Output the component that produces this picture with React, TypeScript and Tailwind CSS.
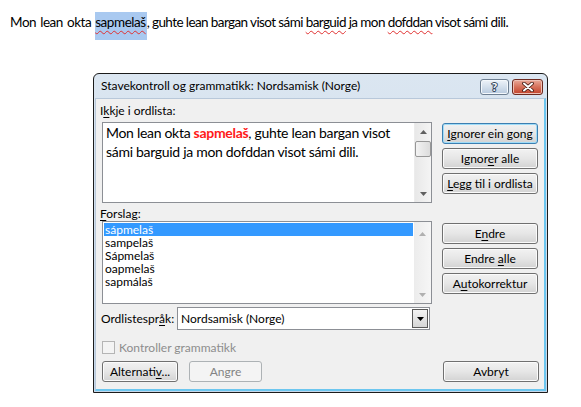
import React from "react";

const UI = "font-['Lato',sans-serif]";

function U({ children }: { children: React.ReactNode }) {
  return <span className="underline underline-offset-[2px] decoration-[1px]">{children}</span>;
}

function Btn({
  children,
  className = "",
  focused = false,
  disabled = false,
}: {
  children: React.ReactNode;
  className?: string;
  focused?: boolean;
  disabled?: boolean;
}) {
  if (disabled) {
    return (
      <div
        className={`h-[21px] flex items-center justify-center rounded-[3px] border border-[#adb2b5] bg-[#f4f4f4] text-[12px] text-[#838383] ${className}`}
      >
        {children}
      </div>
    );
  }
  if (focused) {
    return (
      <div
        className={`h-[21px] flex items-center justify-center rounded-[3px] border border-[#3c7fb1] bg-gradient-to-b from-[#f2f2f2] via-[#e6e6e6] to-[#d3d3d3] shadow-[inset_0_0_0_1px_#9fdcf8] text-[12px] text-black ${className}`}
      >
        {children}
      </div>
    );
  }
  return (
    <div
      className={`h-[21px] flex items-center justify-center rounded-[3px] border border-[#707070] bg-gradient-to-b from-[#f2f2f2] via-[#e6e6e6] to-[#d3d3d3] shadow-[inset_0_0_0_1px_#fbfbfb] text-[12px] text-black ${className}`}
    >
      {children}
    </div>
  );
}

function Arrow({ up, color = "#606060" }: { up?: boolean; color?: string }) {
  return (
    <svg width="7" height="4" viewBox="0 0 7 4">
      {up ? (
        <path d="M0 4 L3.5 0 L7 4 Z" fill={color} />
      ) : (
        <path d="M0 0 L7 0 L3.5 4 Z" fill={color} />
      )}
    </svg>
  );
}

const wavy =
  "underline decoration-wavy decoration-[#e03030] decoration-[1px] underline-offset-[3px]";

export default function App() {
  return (
    <div className={`w-[581px] h-[407px] bg-white overflow-hidden relative`}>
      {/* document text */}
      <div className="h-[73px] pt-[12px] pl-[10px] font-['Lato',sans-serif] text-[13.5px] tracking-[-0.45px] text-black whitespace-nowrap">
        <span className="leading-[20px] align-top inline-block [word-spacing:1px]">Mon lean okta&nbsp;</span>
        <span className="inline-block bg-[#a9c9f0] h-[28px] leading-[20px] align-top pr-[1px]">
          <span className={wavy}>sapmelaš</span>
        </span>
        <span className="leading-[20px] align-top inline-block tracking-[-0.6px]">
          , guhte lean bargan visot sámi <span className={wavy}>barguid</span> ja mon{" "}
          <span className={wavy}>dofddan</span> visot sámi dili.
        </span>
      </div>

      {/* dialog */}
      <div className={`ml-[93px] w-[455px] h-[320px] rounded-t-[6px] border border-[#1b1b1b] bg-gradient-to-b from-[#dbe6f1] to-[#c6d7e9] flex flex-col ${UI}`}>
        {/* title bar */}
        <div className="h-[24px] flex items-start">
          <div className="flex-1 pl-[7px] pt-[4px] text-[12px] leading-[16px] text-black">
            Stavekontroll og grammatikk: Nordsamisk (Norge)
          </div>
          <div className="flex mt-[5px] mr-[4px] gap-[3px]">
            <div className="w-[29px] h-[16px] rounded-[3px] border border-[#6e7f92] bg-gradient-to-b from-[#eef3f9] via-[#d3dfec] to-[#b7c9de] shadow-[inset_0_0_0_1px_#f4f8fc] flex items-center justify-center">
              <span className="text-[12px] leading-none font-bold text-white [-webkit-text-stroke:2px_#3b4b62] [paint-order:stroke_fill]">?</span>
            </div>
            <div className="w-[31px] h-[16px] rounded-[3px] border border-[#6d2a20] bg-gradient-to-b from-[#e9a99a] via-[#d6705a] to-[#c2412a] shadow-[inset_0_0_0_1px_#eec0b5] flex items-center justify-center">
              <svg width="12" height="10" viewBox="0 0 12 10">
                <path d="M2 1.5 L10 8.5 M10 1.5 L2 8.5" stroke="#3a130c" strokeWidth="3.6" strokeLinecap="round" />
                <path d="M2 1.5 L10 8.5 M10 1.5 L2 8.5" stroke="#ffffff" strokeWidth="2" strokeLinecap="round" />
              </svg>
            </div>
          </div>
        </div>

        {/* client */}
        <div className="flex-1 mx-[1px] mb-[1px] border-l border-t border-[#b8c8da] border-r-2 border-b-2 border-r-[#6cc6ef] border-b-[#6cc6ef] bg-[#f0f0f0] pl-[6px] text-[12px] text-black">
          {/* label 1 */}
          <div className="pt-[4px] -ml-[2px] h-[23px] leading-[15px]">
            I<U>k</U>kje i ordlista:
          </div>
          <div className="flex gap-[10px]">
            {/* text box */}
            <div className="w-[330px] h-[81px] border border-[#8c8f95] bg-white flex">
              <div className="flex-1 pl-[3px] pt-[0px] font-['Lato',sans-serif] text-[14px] tracking-[-0.3px] leading-[19px] text-black whitespace-nowrap">
                Mon lean okta <span className="font-bold text-[#ff1a1a]">sapmelaš</span>, guhte lean bargan visot
                <br />
                sámi barguid ja mon dofddan visot sámi dili.
              </div>
              <div className="w-[17px] bg-gradient-to-r from-[#e8e8e8] to-[#f4f4f4] border-l border-[#ececec] flex flex-col items-center">
                <div className="h-[17px] flex items-center justify-center">
                  <Arrow up />
                </div>
                <div className="w-[16px] h-[16px] mt-[1px] rounded-[2px] border border-[#979797] bg-gradient-to-r from-[#f3f3f3] to-[#dcdcdc]" />
                <div className="flex-1" />
                <div className="h-[17px] flex items-center justify-center">
                  <Arrow />
                </div>
              </div>
            </div>
            {/* buttons */}
            <div className="pt-[1px] flex flex-col gap-[4px]">
              <Btn className="w-[96px]" focused>
                <span><U>I</U>gnorer ein gong</span>
              </Btn>
              <Btn className="w-[96px]">
                <span>Ignor<U>e</U>r alle</span>
              </Btn>
              <Btn className="w-[96px]">
                <span><U>L</U>egg til i ordlista</span>
              </Btn>
            </div>
          </div>

          {/* label 2 */}
          <div className="pt-[3px] -ml-[2px] h-[18px] leading-[15px]">
            <U>F</U>orslag:
          </div>
          <div className="flex gap-[10px]">
            <div className="w-[330px] h-[83px] border border-[#8c8f95] bg-white flex">
              <div className="flex-1 pt-[1px] pl-[1px] pr-[1px] text-[12px] leading-[13px]">
                <div className="bg-[#3399ff] text-white pl-[1px]">sápmelaš</div>
                <div className="pl-[1px]">sampelaš</div>
                <div className="pl-[1px]">Sápmelaš</div>
                <div className="pl-[1px]">oapmelaš</div>
                <div className="pl-[1px]">sapmálaš</div>
              </div>
              <div className="w-[17px] bg-gradient-to-r from-[#ececec] to-[#f6f6f6] flex flex-col items-center">
                <div className="h-[17px] mt-[3px] flex items-center justify-center">
                  <Arrow up color="#b0b0b0" />
                </div>
                <div className="flex-1" />
                <div className="h-[17px] flex items-center justify-center">
                  <Arrow color="#b0b0b0" />
                </div>
              </div>
            </div>
            <div className="pt-[2px] flex flex-col gap-[4px]">
              <Btn className="w-[96px]">
                <span>E<U>n</U>dre</span>
              </Btn>
              <Btn className="w-[96px]">
                <span>Endre <U>a</U>lle</span>
              </Btn>
              <Btn className="w-[96px]">
                <span>A<U>u</U>tokorrektur</span>
              </Btn>
            </div>
          </div>

          {/* language combo */}
          <div className="mt-[3px] flex items-center h-[23px]">
            <div className="w-[76px] -ml-[1px]">
              Ordlistespr<U>å</U>k:
            </div>
            <div className="w-[253px] h-[23px] border border-[#8c8f95] bg-white flex items-center">
              <div className="flex-1 pl-[3px]">Nordsamisk (Norge)</div>
              <div className="w-[16px] h-[19px] mr-[1px] border border-[#5a5a5a] bg-gradient-to-b from-[#f4f4f4] to-[#d6d6d6] flex items-center justify-center">
                <Arrow color="#000" />
              </div>
            </div>
          </div>

          {/* checkbox */}
          <div className="mt-[11px] flex items-center h-[13px] gap-[4px]">
            <div className="w-[13px] h-[13px] border border-[#b5b5b5] bg-[#f4f4f4]" />
            <span className="text-[#8d8d8d] leading-[13px]">Kontroller grammatikk</span>
          </div>

          {/* bottom buttons */}
          <div className="mt-[7px] flex items-center">
            <Btn className="w-[76px]">
              <span>Alternati<U>v</U>...</span>
            </Btn>
            <Btn className="w-[73px] ml-[11px]" disabled>
              <span>Angre</span>
            </Btn>
            <div className="flex-1" />
            <Btn className="w-[96px] mr-[5px]">
              <span>Avbryt</span>
            </Btn>
          </div>
        </div>
      </div>
    </div>
  );
}
